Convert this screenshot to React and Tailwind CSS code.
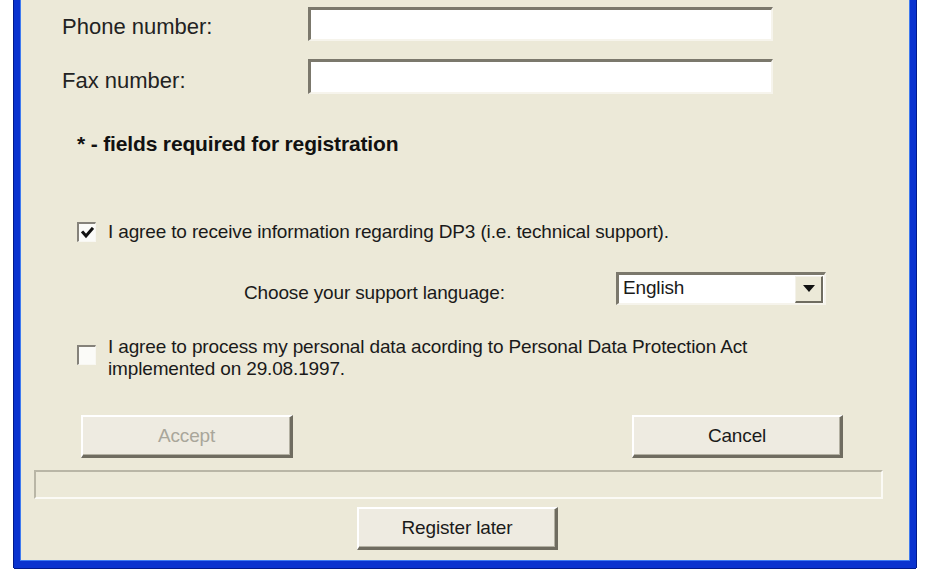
function Sunken({ className = "", children }) {
  return (
    <div
      className={
        "border-t-[3px] border-l-[3px] border-t-[#7b786c] border-l-[#7b786c] border-r-2 border-b-2 border-r-[#f6f4ec] border-b-[#f6f4ec] bg-white " +
        className
      }
    >
      {children}
    </div>
  );
}

function Btn({ className = "", disabled = false, children }) {
  return (
    <div
      className={
        "flex h-[43px] items-center justify-center border-t-2 border-l-2 border-t-white border-l-white border-r-[3px] border-b-[3px] border-r-[#6f6c60] border-b-[#6f6c60] bg-[#eeebe1] text-[19px] tracking-[-0.15px] shadow-[inset_-1px_-1px_0_#b3b0a2] " +
        (disabled ? "text-[#a9a69a] " : "text-[#1a1a1a] ") +
        className
      }
    >
      {children}
    </div>
  );
}

function CheckBox({ checked, className = "" }) {
  return (
    <div
      className={
        "flex h-[20px] w-[19px] shrink-0 items-center justify-center border-t-2 border-l-2 border-t-[#85827a] border-l-[#85827a] border-r border-b border-r-[#f8f7f2] border-b-[#f8f7f2] bg-[#fbfbf8] " +
        className
      }
    >
      {checked && (
        <svg width="13" height="12" viewBox="0 0 13 12">
          <path d="M2 5.5 L5 9 L11 2" fill="none" stroke="#111" strokeWidth="3" strokeLinecap="square" />
        </svg>
      )}
    </div>
  );
}

export default function App() {
  return (
    <div className="h-[585px] w-[931px] overflow-hidden bg-white font-['Liberation_Sans',Arial,sans-serif] text-[#1a1a1a]">
      <div className="ml-[14px] h-[568px] w-[902px] border-x-[6px] border-b-[7px] border-[#0a33cf] bg-[#ece9d8] shadow-[-1px_0_0_#001a8c,1px_0_0_#001a8c,0_1px_0_#001a8c,inset_1px_0_0_#3f7af0,inset_-1px_0_0_#3f7af0,inset_0_-1px_0_#3f7af0]">
        <div className="flex flex-col">
          {/* Phone */}
          <div className="mt-[7px] flex h-[34px] items-start">
            <div className="ml-[42px] mt-[7px] w-[246px] text-[22px] leading-[26px] text-[#222]">Phone number:</div>
            <Sunken className="h-[34px] w-[465px]" />
          </div>
          {/* Fax */}
          <div className="mt-[18px] flex h-[35px] items-start">
            <div className="ml-[42px] mt-[9px] w-[246px] text-[22px] leading-[26px] text-[#222]">Fax number:</div>
            <Sunken className="h-[35px] w-[465px]" />
          </div>
          {/* Note */}
          <div className="ml-[57px] mt-[38px] h-[24px] text-[21px] font-bold leading-[24px] tracking-[-0.15px] text-[#111]">
            * - fields required for registration
          </div>
          {/* Checkbox 1 */}
          <div className="ml-[57px] mt-[64px] flex h-[24px] items-center gap-[12px]">
            <CheckBox checked />
            <div className="whitespace-nowrap text-[19px] leading-[24px] tracking-[-0.15px]">
              I agree to receive information regarding DP3 (i.e. technical support).
            </div>
          </div>
          {/* Language */}
          <div className="mt-[28px] flex h-[33px] items-start">
            <div className="ml-[224px] mt-[9px] w-[372px] whitespace-nowrap text-[19px] leading-[24px] tracking-[-0.15px]">
              Choose your support language:
            </div>
            <Sunken className="flex h-[33px] w-[210px] items-center justify-between">
              <div className="ml-[4px] mt-[-3px] text-[19px] leading-[24px] tracking-[-0.15px]">English</div>
              <div className="mr-[1px] flex h-[27px] w-[28px] items-center justify-center border-t border-l border-t-[#f4f2ea] border-l-[#f4f2ea] border-r-2 border-b-2 border-r-[#6f6c60] border-b-[#6f6c60] bg-[#ece9d8]">
                <svg width="12" height="7" viewBox="0 0 12 7">
                  <polygon points="0,0 12,0 6,7" fill="#111" />
                </svg>
              </div>
            </Sunken>
          </div>
          {/* Checkbox 2 */}
          <div className="ml-[57px] mt-[31px] flex h-[44px] items-start gap-[12px]">
            <CheckBox className="mt-[9px]" />
            <div className="whitespace-nowrap text-[19px] leading-[22px] tracking-[-0.15px]">
              I agree to process my personal data acording to Personal Data Protection Act
              <br />
              implemented on 29.08.1997.
            </div>
          </div>
          {/* Buttons */}
          <div className="mt-[35px] flex h-[43px] justify-between pl-[61px] pr-[67px]">
            <Btn disabled className="w-[212px]">Accept</Btn>
            <Btn className="w-[211px]">Cancel</Btn>
          </div>
          {/* Status bar */}
          <div className="ml-[14px] mt-[12px] h-[29px] w-[849px] border-t-2 border-l-2 border-t-[#b9b6a6] border-l-[#b9b6a6] border-r-2 border-b-2 border-r-[#fbfaf5] border-b-[#fbfaf5]" />
          {/* Register later */}
          <div className="mt-[8px] flex">
            <Btn className="ml-[337px] w-[201px]">Register later</Btn>
          </div>
        </div>
      </div>
    </div>
  );
}
